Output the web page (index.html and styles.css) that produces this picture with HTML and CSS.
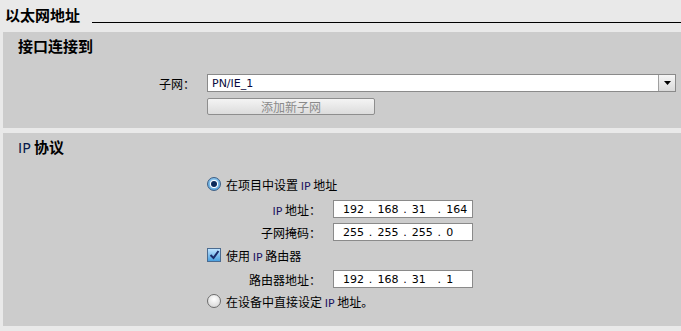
FILE: index.html
```html
<!DOCTYPE html>
<html lang="zh">
<head>
<meta charset="utf-8">
<link rel="stylesheet" href="styles.css">
</head>
<body>
<div class="head">
  <span class="head-title">以太网地址</span>
  <span class="head-line"></span>
</div>
<section class="panel p1">
  <h2 class="ptitle">接口连接到</h2>
  <div class="row subnet-row">
    <span class="lbl lbl-a">子网：</span>
    <div class="select">
      <span class="select-text">PN/IE_1</span>
      <span class="select-btn"><svg width="9" height="6" viewBox="0 0 9 6"><path d="M1 1h7L4.5 5z" fill="#000"/></svg></span>
    </div>
  </div>
  <div class="row btn-row">
    <button class="addbtn" disabled>添加新子网</button>
  </div>
</section>
<section class="panel p2">
  <h2 class="ptitle"><span class="lat">IP</span> 协议</h2>
  <div class="row opt-row opt1">
    <span class="radio on"><span class="dot"></span></span>
    <span class="opt-text">在项目中设置 <span class="lat">IP</span> 地址</span>
  </div>
  <div class="row field-row f1">
    <span class="lbl lbl-b"><span class="lat">IP</span> 地址：</span>
    <div class="ipbox"><span class="n">192</span><span class="d">.</span><span class="n">168</span><span class="d">.</span><span class="n">31</span><span class="d">.</span><span class="n">164</span></div>
  </div>
  <div class="row field-row f2">
    <span class="lbl lbl-b">子网掩码：</span>
    <div class="ipbox"><span class="n">255</span><span class="d">.</span><span class="n">255</span><span class="d">.</span><span class="n">255</span><span class="d">.</span><span class="n">0</span></div>
  </div>
  <div class="row opt-row opt2">
    <span class="check"><svg width="11" height="10" viewBox="0 0 11 10"><path d="M1.5 5l3 3 5-7" fill="none" stroke="#1a2a6a" stroke-width="2"/></svg></span>
    <span class="opt-text">使用 <span class="lat">IP</span> 路由器</span>
  </div>
  <div class="row field-row f3">
    <span class="lbl lbl-b">路由器地址：</span>
    <div class="ipbox"><span class="n">192</span><span class="d">.</span><span class="n">168</span><span class="d">.</span><span class="n">31</span><span class="d">.</span><span class="n">1</span></div>
  </div>
  <div class="row opt-row opt3">
    <span class="radio"></span>
    <span class="opt-text">在设备中直接设定 <span class="lat">IP</span> 地址。</span>
  </div>
</section>
</body>
</html>
```

FILE: styles.css
```css
html, body {
  margin: 0;
  padding: 0;
}
body {
  width: 681px;
  height: 331px;
  background: #e9e9e9;
  font-family: "DejaVu Sans", "Noto Sans CJK SC", sans-serif;
  font-size: 12px;
  color: #000;
  overflow: hidden;
}
.lat {
  font-family: "DejaVu Sans", sans-serif;
  font-size: 11px;
}
.head {
  height: 32px;
  display: flex;
  align-items: flex-start;
}
.head-title {
  font-family: "Noto Sans CJK SC", sans-serif;
  font-weight: bold;
  font-size: 15px;
  line-height: 18px;
  margin: 6px 0 0 5px;
}
.head-line {
  flex: 1;
  height: 1px;
  background: #000;
  margin: 22px 0 0 12px;
}
.panel {
  margin-left: 3px;
  background: #cccccc;
  box-sizing: border-box;
  padding-top: 4px;
}
.p1 {
  height: 96px;
  margin-bottom: 5px;
}
.p2 {
  height: 193px;
}
.ptitle {
  margin: 0 0 0 15px;
  font-family: "Noto Sans CJK SC", sans-serif;
  font-weight: bold;
  font-size: 15px;
  line-height: 20px;
}
.ptitle .lat {
  font-weight: normal;
  font-size: 14px;
  color: #0a1a4a;
}
.row {
  display: flex;
  align-items: center;
}
.lbl {
  text-align: right;
  font-family: "Noto Sans CJK SC", sans-serif;
}
.lbl-a {
  width: 192px;
  margin-right: 12px;
}
.subnet-row {
  margin-top: 18px;
  height: 18px;
}
.select {
  flex: 1;
  margin-right: 5px;
  height: 18px;
  box-sizing: border-box;
  border: 1px solid #8a8a8a;
  background: #fff;
  display: flex;
  align-items: center;
}
.select-text {
  flex: 1;
  padding-left: 4px;
  font-size: 11px;
  color: #0a0a40;
}
.select-btn {
  width: 16px;
  height: 16px;
  border-left: 1px solid #a0a0a0;
  background: linear-gradient(#f6f6f6, #d9d9d9);
  display: flex;
  align-items: center;
  justify-content: center;
}
.btn-row {
  margin-top: 6px;
  padding-left: 204px;
}
.addbtn {
  width: 168px;
  height: 17px;
  padding: 0;
  box-sizing: border-box;
  border: 1px solid #8e8e8e;
  border-radius: 2px;
  background: linear-gradient(#f4f4f4, #dcdcdc);
  color: #8a8a8a;
  font-family: "Noto Sans CJK SC", sans-serif;
  font-size: 12px;
  line-height: 15px;
}
.opt-row {
  padding-left: 204px;
  height: 16px;
}
.opt1 {
  margin-top: 18px;
}
.opt2 {
  margin-top: 6px;
}
.opt3 {
  margin-top: 5px;
}
.opt-text {
  margin-left: 5px;
  font-family: "Noto Sans CJK SC", sans-serif;
}
.opt-text .lat, .lbl .lat {
  color: #1a1060;
}
.radio {
  width: 14px;
  height: 14px;
  box-sizing: border-box;
  border-radius: 50%;
  border: 1px solid #6d6d6d;
  background: radial-gradient(circle at 50% 35%, #ffffff, #d0d0d0);
  display: flex;
  align-items: center;
  justify-content: center;
}
.radio.on {
  border-color: #3d5f86;
  background: radial-gradient(circle at 50% 40%, #bfe6ff, #3a8fd0);
}
.radio .dot {
  width: 6px;
  height: 6px;
  border-radius: 50%;
  background: #0b2a5a;
  box-shadow: 0 0 0 1px #fff;
}
.check {
  width: 14px;
  height: 14px;
  box-sizing: border-box;
  border: 1px solid #4b6b90;
  background: linear-gradient(#bfe3ff, #4aa0e0);
  display: flex;
  align-items: center;
  justify-content: center;
}
.field-row {
  height: 18px;
}
.f1 {
  margin-top: 8px;
}
.f2 {
  margin-top: 5px;
}
.f3 {
  margin-top: 7px;
}
.lbl-b {
  width: 318px;
  margin-right: 12px;
}
.ipbox {
  width: 140px;
  height: 18px;
  box-sizing: border-box;
  border: 1px solid #8a8a8a;
  background: #fff;
  display: flex;
  align-items: center;
  padding-left: 9px;
  font-family: "DejaVu Sans", sans-serif;
  font-size: 11px;
  color: #000;
}
.ipbox .n {
  width: 27px;
}
.ipbox .d {
  width: 9px;
}
```
